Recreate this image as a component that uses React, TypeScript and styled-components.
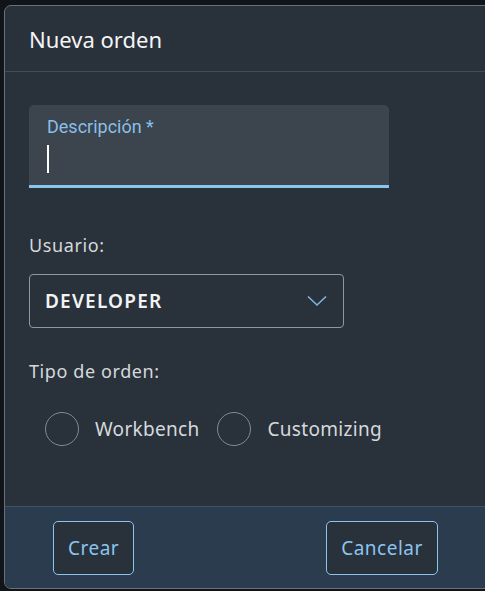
import React from "react";
import styled, { createGlobalStyle } from "styled-components";

const Global = createGlobalStyle`
  html, body { margin: 0; padding: 0; background: #111418; overflow: hidden; }
  body { font-family: "Noto Sans", "Open Sans", sans-serif; }
`;

const Page = styled.div`
  width: 485px;
  height: 591px;
  padding: 5px 0 0 4px;
  box-sizing: border-box;
  overflow: hidden;
`;

const Dialog = styled.div`
  width: 520px;
  height: 584px;
  box-sizing: border-box;
  border: 1px solid #6b7076;
  border-radius: 7px;
  background: #29313a;
  display: flex;
  flex-direction: column;
  overflow: hidden;
`;

const Header = styled.div`
  height: 66px;
  box-sizing: border-box;
  border-bottom: 1px solid #434b54;
  display: flex;
  align-items: center;
  padding-left: 24px;
`;

const Title = styled.h1`
  margin: 0;
  font-family: "Noto Sans", sans-serif;
  font-weight: 400;
  font-size: 22px;
  color: #f4f5f6;
`;

const Body = styled.div`
  flex: 1;
  padding: 33px 0 0 24px;
  display: flex;
  flex-direction: column;
`;

const InputBox = styled.div`
  width: 360px;
  height: 83px;
  box-sizing: border-box;
  background: #3c444d;
  border-radius: 5px 5px 0 0;
  border-bottom: 3px solid #8cc4f0;
  padding: 12px 18px 0;
  display: flex;
  flex-direction: column;
`;

const FloatLabel = styled.label`
  font-family: "Roboto", sans-serif;
  font-size: 18px;
  color: #89bfe9;
  line-height: 20px;
`;

const Caret = styled.div`
  width: 2px;
  height: 28px;
  background: #ffffff;
  margin-top: 8px;
`;

const FieldLabel = styled.div<{ $top: number }>`
  margin-top: ${(p) => p.$top}px;
  font-size: 18px;
  letter-spacing: 0.6px;
  color: #d5d9dd;
  line-height: 20px;
`;

const Select = styled.div`
  margin-top: 19px;
  width: 315px;
  height: 54px;
  box-sizing: border-box;
  border: 1px solid #8a99aa;
  border-radius: 4px;
  display: flex;
  align-items: center;
  justify-content: space-between;
  padding: 0 16px 0 15px;
`;

const SelectValue = styled.span`
  font-size: 19px;
  font-weight: 600;
  letter-spacing: 1.2px;
  color: #f2f3f4;
`;

const RadioGroup = styled.div`
  margin-top: 31px;
  margin-left: 16px;
  display: flex;
  align-items: center;
`;

const RadioItem = styled.label`
  display: flex;
  align-items: center;
  margin-right: 18px;
`;

const Circle = styled.span`
  width: 34px;
  height: 34px;
  box-sizing: border-box;
  border: 1.5px solid #7d8b99;
  border-radius: 50%;
  margin-right: 16px;
`;

const RadioText = styled.span`
  font-size: 19px;
  letter-spacing: 0.3px;
  color: #d5d9dd;
`;

const Footer = styled.div`
  height: 82px;
  box-sizing: border-box;
  background: #2b3c4f;
  border-top: 1px solid #3f5368;
  display: flex;
  align-items: center;
  padding-left: 48px;
`;

const Button = styled.button<{ $ml?: number }>`
  height: 54px;
  box-sizing: border-box;
  padding: 0 14px;
  margin-left: ${(p) => p.$ml ?? 0}px;
  background: #29313a;
  border: 1px solid #8cc4f0;
  border-radius: 5px;
  color: #8cc4f0;
  font-family: "Noto Sans", sans-serif;
  font-size: 19px;
  letter-spacing: 0.5px;
`;

export default function App() {
  return (
    <>
      <Global />
      <Page>
        <Dialog>
          <Header>
            <Title>Nueva orden</Title>
          </Header>
          <Body>
            <InputBox>
              <FloatLabel>Descripción *</FloatLabel>
              <Caret />
            </InputBox>
            <FieldLabel $top={47}>Usuario:</FieldLabel>
            <Select>
              <SelectValue>DEVELOPER</SelectValue>
              <svg width="20" height="12" viewBox="0 0 20 12">
                <path d="M1 1.5 L10 10 L19 1.5" fill="none" stroke="#7fb6e3" strokeWidth="1.6" />
              </svg>
            </Select>
            <FieldLabel $top={33}>Tipo de orden:</FieldLabel>
            <RadioGroup>
              <RadioItem>
                <Circle />
                <RadioText>Workbench</RadioText>
              </RadioItem>
              <RadioItem>
                <Circle />
                <RadioText>Customizing</RadioText>
              </RadioItem>
            </RadioGroup>
          </Body>
          <Footer>
            <Button>Crear</Button>
            <Button $ml={192}>Cancelar</Button>
          </Footer>
        </Dialog>
      </Page>
    </>
  );
}
